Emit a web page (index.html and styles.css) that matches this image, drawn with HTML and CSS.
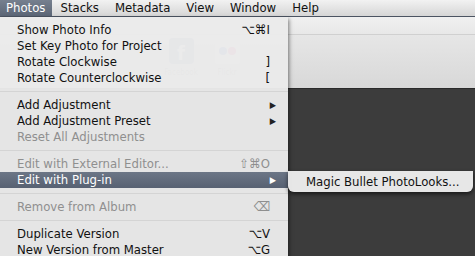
FILE: index.html
```html
<!DOCTYPE html>
<html lang="en">
<head>
    <meta charset="UTF-8">
    <title>Aperture - Photos menu</title>
    <link rel="stylesheet" href="styles.css">
</head>
<body>
    <!-- Верхняя строка меню -->
    <div class="menu-bar">
        <span class="menu-title active">Photos</span>
        <span class="menu-title">Stacks</span>
        <span class="menu-title">Metadata</span>
        <span class="menu-title">View</span>
        <span class="menu-title">Window</span>
        <span class="menu-title">Help</span>
    </div>

    <!-- Окно программы под меню -->
    <div class="window">
        <div class="toolbar">
            <div class="toolbar-top"></div>
            <div class="toolbar-main">
                <div class="share-btn">
                    <div class="fb-icon">f</div>
                    <span>Facebook</span>
                </div>
                <div class="share-btn">
                    <div class="flickr-icon"><i class="dot blue"></i><i class="dot pink"></i></div>
                    <span>Flickr</span>
                </div>
            </div>
        </div>
        <div class="content"></div>
    </div>

    <!-- Выпадающее меню Photos -->
    <div class="dropdown">
        <div class="item"><span>Show Photo Info</span><span class="key">⌥⌘I</span></div>
        <div class="item"><span>Set Key Photo for Project</span></div>
        <div class="item"><span>Rotate Clockwise</span><span class="key">]</span></div>
        <div class="item"><span>Rotate Counterclockwise</span><span class="key">[</span></div>
        <div class="sep"></div>
        <div class="item"><span>Add Adjustment</span><span class="arrow">▶</span></div>
        <div class="item"><span>Add Adjustment Preset</span><span class="arrow">▶</span></div>
        <div class="item disabled"><span>Reset All Adjustments</span></div>
        <div class="sep"></div>
        <div class="item disabled"><span>Edit with External Editor...</span><span class="key">⇧⌘O</span></div>
        <div class="item selected">
            <span>Edit with Plug-in</span><span class="arrow">▶</span>
            <div class="submenu">Magic Bullet PhotoLooks...</div>
        </div>
        <div class="sep"></div>
        <div class="item disabled"><span>Remove from Album</span><span class="key">⌫</span></div>
        <div class="sep"></div>
        <div class="item"><span>Duplicate Version</span><span class="key">⌥V</span></div>
        <div class="item"><span>New Version from Master</span><span class="key">⌥G</span></div>
    </div>
</body>
</html>
```

FILE: styles.css
```css
body {
    margin: 0;
    width: 475px;
    height: 256px;
    overflow: hidden;
    position: relative;
    background-color: #3b3b3b;
    font-family: "DejaVu Sans Condensed", "DejaVu Sans", sans-serif;
    font-stretch: semi-condensed;
    font-size: 13px;
    color: #111111;
}

/* Строка меню */
.menu-bar {
    height: 16px;
    display: flex;
    align-items: center;
    background: linear-gradient(#f2f2f2, #d6d6d6);
    border-bottom: 1px solid #4c5462;
}

.menu-title {
    height: 16px;
    line-height: 16px;
    padding: 0 8px;
}

.menu-title.active {
    padding: 0 7px 0 6px;
    background: linear-gradient(#76808f, #5c6676);
    color: #ffffff;
}

/* Окно */
.toolbar-top {
    height: 17px;
    background: linear-gradient(#f0f0f0, #e8e8e8);
    border-bottom: 1px solid #d0d0d0;
}

.toolbar-main {
    height: 53px;
    background: linear-gradient(#e6e6e6, #d8d8d8);
    border-bottom: 1px solid #2a2a2a;
    display: flex;
    padding-left: 158px;
}

.share-btn {
    display: flex;
    flex-direction: column;
    align-items: center;
    width: 46px;
    padding-top: 3px;
    font-size: 8px;
    color: #777777;
}

.fb-icon {
    width: 25px;
    height: 26px;
    border-radius: 4px;
    background-color: #5a73a8;
    color: #ffffff;
    font-weight: bold;
    font-size: 20px;
    line-height: 30px;
    text-align: center;
    margin-bottom: 4px;
}

.flickr-icon {
    width: 25px;
    height: 26px;
    border-radius: 4px;
    background-color: #f4f4f4;
    display: flex;
    align-items: center;
    justify-content: center;
    gap: 1px;
    margin-bottom: 4px;
}

.dot {
    width: 8px;
    height: 8px;
    border-radius: 50%;
}

.dot.blue { background-color: #2d66cc; }
.dot.pink { background-color: #e8207f; }

.content {
    height: 170px;
    background-color: #3c3c3c;
}

/* Выпадающее меню */
.dropdown {
    position: absolute;
    top: 17px;
    left: 0;
    width: 288px;
    height: 250px;
    padding-top: 5px;
    box-sizing: border-box;
    background-color: rgba(234, 234, 234, 0.97);
    box-shadow: 1px 2px 4px rgba(0, 0, 0, 0.5);
}

.item {
    position: relative;
    height: 16px;
    line-height: 16px;
    display: flex;
    justify-content: space-between;
    padding: 0 12px 0 17px;
}

.key {
    padding-right: 6px;
}

.arrow {
    font-size: 9px;
    color: #222222;
}

.disabled {
    color: #8f8f8f;
}

.selected {
    background: linear-gradient(#6c7686, #576172);
    color: #ffffff;
}

.selected .arrow {
    color: #ffffff;
}

.sep {
    height: 5px;
    margin-bottom: 5px;
    border-bottom: 1px solid #d4d4d4;
}

/* Подменю */
.submenu {
    position: absolute;
    left: 288px;
    top: -1px;
    width: 167px;
    height: 21px;
    line-height: 21px;
    padding-left: 18px;
    background-color: rgba(236, 236, 236, 0.97);
    color: #111111;
    border-radius: 0 0 6px 6px;
    box-shadow: 0 2px 4px rgba(0, 0, 0, 0.6);
}
```
